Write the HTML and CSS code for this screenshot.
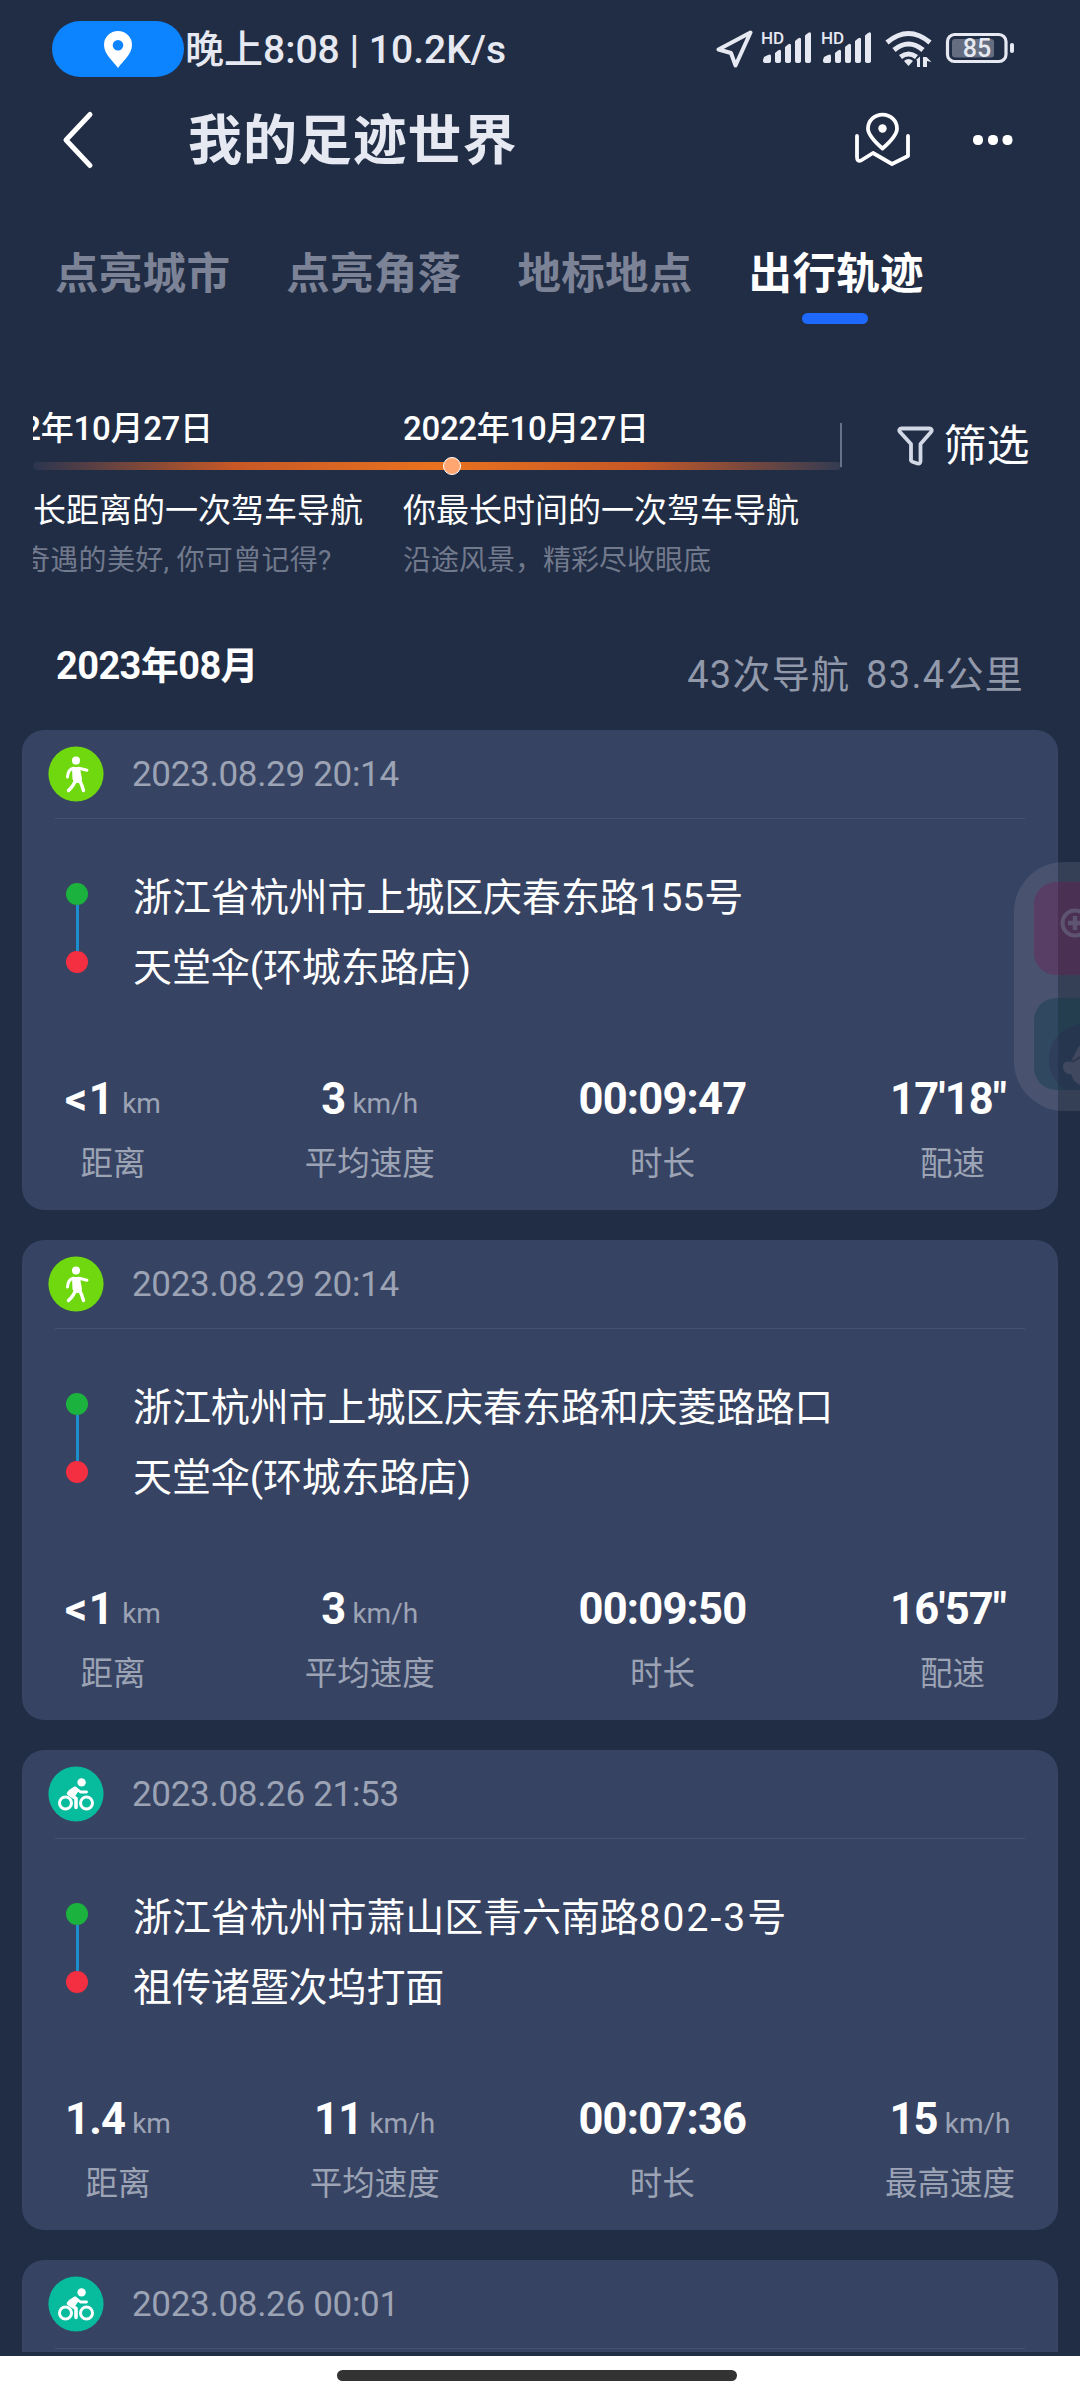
FILE: index.html
```html
<!DOCTYPE html>
<html lang="zh-CN">
<head>
<meta charset="utf-8">
<title>我的足迹世界</title>
<link rel="stylesheet" href="styles.css">
</head>
<body>
<svg class="defs" aria-hidden="true">
  <symbol id="walk" viewBox="0 0 56 56">
    <circle cx="28" cy="28" r="27.6" fill="#70d80f"/>
    <g fill="#fff" stroke="#fff" stroke-linecap="round" stroke-linejoin="round">
      <circle cx="28" cy="14.6" r="4" stroke="none"/>
      <path d="M25 22h6l2 11-1.500 3h-4l-2-3z" stroke-width="2"/>
      <path d="M25.500 22.300q-5.500 1-6 8.700M31 22.200l8 2" fill="none" stroke-width="3"/>
      <path d="M27.500 34q-1.500 5.500-7 10.500M31.500 34q2.500 5 4 10.500" fill="none" stroke-width="3.400"/>
    </g>
  </symbol>
  <symbol id="bike" viewBox="0 0 56 56">
    <circle cx="28" cy="28" r="27.6" fill="#07bb9d"/>
    <g fill="none" stroke="#fff" stroke-linecap="round" stroke-linejoin="round">
      <circle cx="17.500" cy="37" r="6" stroke-width="3"/>
      <circle cx="38.500" cy="37" r="6" stroke-width="3"/>
      <circle cx="33.600" cy="16.400" r="4.200" fill="#fff" stroke="none"/>
      <path d="M28 22.500l4.500 3.500h6" stroke-width="2.800"/>
      <path d="M26.500 22.500q-4 2-6 5l7.500 5v9" stroke-width="3.600"/>
      <path d="M27.500 21.500l-6 5 4.500 3.500 3.500-5z" fill="#fff" stroke-width="2"/>
    </g>
  </symbol>
</svg>
<div class="screen">
  <div class="status">
    <div class="loc-pill">
      <svg width="28" height="37" viewBox="0 0 28 37"><path fill="#fff" fill-rule="evenodd" d="M14 0A14 14 0 0 0 0 14C0 23 9 30 14 37C19 30 28 23 28 14A14 14 0 0 0 14 0ZM14 9a5.300 5.300 0 1 1 0 10.600A5.300 5.300 0 0 1 14 9Z"/></svg>
    </div>
    <span class="clock">晚上8:08 | 10.2K/s</span>
    <svg class="sys" width="302" height="40" viewBox="0 0 302 40">
      <g fill="none" stroke="#e6e9f1" stroke-linejoin="round">
        <path d="M34.500 3.500L2.500 20.500L15 24L19.500 36.500Z" stroke-width="4"/>
        <path d="M171 13.500Q192.500-4.500 214 13.500M178 21Q192.500 9 207 21M184.500 28Q192.500 22 200.500 28" stroke-width="5"/>
        <rect x="231.500" y="5.500" width="58.500" height="27" rx="7" stroke-width="3.200"/>
      </g>
      <g fill="#e6e9f1">
        <path d="M188 32q4.500-4 9 0l-4.500 5zM200 31l4-3.500v10.500h-3v-6.500zM207 28h3.500l5 5-4.500-1v6h-4z"/>
        <rect x="236" y="10" width="42" height="18.500" rx="3" opacity=".35"/>
        <rect x="294" y="14" width="4" height="10" rx="2"/>
        <g id="bars"><path d="M48 28l4-2q3-1.500 3 1v5q0 2-3 2h-2q-3 0-3-2v-1zM59 24l3-2.500q3-2 3 1V32q0 2-3 2t-3-2zM69 18l3-2.500q3-2 3 1V32q0 2-3 2t-3-2zM79 12l3-2.500q3-2 3 1V32q0 2-3 2t-3-2zM89 6.500l3-2.500q3-2 3 1V32q0 2-3 2t-3-2z"/></g>
        <use href="#bars" x="60"/>
        <text x="45" y="14.500" class="hd">HD</text>
        <text x="105" y="14.500" class="hd">HD</text>
        <text x="261" y="28" text-anchor="middle" class="pct">85</text>
      </g>
    </svg>
  </div>

  <header class="bar">
    <svg class="back" width="36" height="60" viewBox="0 0 36 60"><path d="M29 4.500L5 30L29 55.500" fill="none" stroke="#fff" stroke-width="5" stroke-linecap="round" stroke-linejoin="round"/></svg>
    <h1>我的足迹世界</h1>
    <svg class="map" width="58" height="56" viewBox="0 0 58 56"><g fill="none" stroke="#fff" stroke-width="3.800" stroke-linecap="round" stroke-linejoin="round"><path d="M4 24V45q0 5 4 3.500L20 41L39 52L55 44V24"/><path d="M29.500 36.500Q15 24 15 16.500A14.500 13.800 0 0 1 44 16.500Q44 24 29.500 36.500Z"/></g><circle cx="29.500" cy="16.500" r="4.200" fill="#fff"/></svg>
    <svg class="more" width="40" height="10" viewBox="0 0 40 10"><rect width="10" height="10" rx="4.500" fill="#fff"/><rect x="15" width="10" height="10" rx="4.500" fill="#fff"/><rect x="29.500" width="10" height="10" rx="4.500" fill="#fff"/></svg>
  </header>

  <nav class="tabs">
    <span>点亮城市</span><span>点亮角落</span><span>地标地点</span><span class="on">出行轨迹</span>
  </nav>

  <section class="mile">
    <div class="track">
      <div class="line"><i class="dot"></i></div>
      <div class="items">
        <div class="item">
          <b>2022年10月27日</b><p>你最长距离的一次驾车导航</p><small class="cut">奇遇的美好, 你可曾记得?</small>
        </div>
        <div class="item">
          <b>2022年10月27日</b><p>你最长时间的一次驾车导航</p><small>沿途风景，精彩尽收眼底</small>
        </div>
      </div>
    </div>
    <i class="sep"></i>
    <div class="filter">
      <svg width="38" height="40" viewBox="0 0 38 40"><path d="M4.500 2.500H32.500Q36 3 34 6L23.500 18V35.500Q23 38 20.500 37.500L16 36Q13.500 35 14 33V18L3 6Q1 3 4.500 2.500Z" fill="none" stroke="#d2d8e6" stroke-width="3.800" stroke-linejoin="round"/></svg>
      <span>筛选</span>
    </div>
  </section>

  <div class="month"><b>2023年08月</b><span>43次导航 83.4公里</span></div>

  <main class="list">
    <article class="card">
      <div class="head"><svg class="mode"><use href="#walk"/></svg><time>2023.08.29 20:14</time></div>
      <div class="route"><div class="rail"><i></i><u></u><i class="end"></i></div><div class="addr"><p>浙江省杭州市上城区庆春东路155号</p><p>天堂伞(环城东路店)</p></div></div>
      <div class="stats">
        <div><p><b class="lt">&lt;1</b><em>km</em></p><span>距离</span></div>
        <div><p><b>3</b><em>km/h</em></p><span>平均速度</span></div>
        <div><p><b>00:09:47</b></p><span>时长</span></div>
        <div><p><b class="pace">17'18"</b></p><span>配速</span></div>
      </div>
    </article>
    <article class="card">
      <div class="head"><svg class="mode"><use href="#walk"/></svg><time>2023.08.29 20:14</time></div>
      <div class="route"><div class="rail"><i></i><u></u><i class="end"></i></div><div class="addr"><p>浙江杭州市上城区庆春东路和庆菱路路口</p><p>天堂伞(环城东路店)</p></div></div>
      <div class="stats">
        <div><p><b class="lt">&lt;1</b><em>km</em></p><span>距离</span></div>
        <div><p><b>3</b><em>km/h</em></p><span>平均速度</span></div>
        <div><p><b>00:09:50</b></p><span>时长</span></div>
        <div><p><b class="pace">16'57"</b></p><span>配速</span></div>
      </div>
    </article>
    <article class="card">
      <div class="head"><svg class="mode"><use href="#bike"/></svg><time>2023.08.26 21:53</time></div>
      <div class="route"><div class="rail"><i></i><u></u><i class="end"></i></div><div class="addr"><p>浙江省杭州市萧山区青六南路<span class="num">802-3</span>号</p><p>祖传诸暨次坞打面</p></div></div>
      <div class="stats">
        <div><p><b>1.4</b><em>km</em></p><span>距离</span></div>
        <div><p><b>11</b><em>km/h</em></p><span>平均速度</span></div>
        <div><p><b>00:07:36</b></p><span>时长</span></div>
        <div><p><b>15</b><em>km/h</em></p><span>最高速度</span></div>
      </div>
    </article>
    <article class="card">
      <div class="head"><svg class="mode"><use href="#bike"/></svg><time>2023.08.26 00:01</time></div>
    </article>
  </main>

  <footer class="home"><i></i></footer>

  <svg class="float" width="66" height="250" viewBox="0 0 66 250">
    <path d="M66 0H50A50 50 0 0 0 0 50V199A50 50 0 0 0 50 249H66Z" fill="#fff" opacity=".09"/>
    <path d="M66 20H42A22 22 0 0 0 20 42V91A22 22 0 0 0 42 113H66Z" fill="#500032" opacity=".22"/>
    <path d="M66 20H42A22 22 0 0 0 20 42V91A22 22 0 0 0 42 113H66Z" fill="#c02878" opacity=".12"/>
    <path d="M66 136H42A22 22 0 0 0 20 158V206A22 22 0 0 0 42 228H66Z" fill="#0a3a48" opacity=".38"/>
    <path d="M66 162Q34 170 35 200Q36 218 52 228H66Z" fill="#2a2850" opacity=".3"/>
    <path d="M66 183Q61 190 57 200Q48 198 49 206Q51 213 57 212Q59 220 66 223Z" fill="#8a8090" opacity=".25"/>
    <path d="M58 200l8-5" stroke="#182338" stroke-width="2" opacity=".5"/>
    <g fill="none" stroke="#7d879f" opacity=".4"><circle cx="61" cy="61" r="12.500" stroke-width="4"/><path d="M54 61h12M61 54v14" stroke-width="4.500"/></g>
  </svg>
</div>
</body>
</html>
```
FILE: styles.css
```css
* { box-sizing: border-box; margin: 0; padding: 0; }
body {
  width: 1080px;
  background: #212d45;
  color: #fff;
  font-family: Roboto, "Noto Sans CJK SC", sans-serif;
}
i, em { font-style: normal; }
u { text-decoration: none; }
svg { display: block; flex: none; }
.defs { position: absolute; width: 0; height: 0; }
.screen {
  position: relative;
  display: flex;
  flex-direction: column;
  width: 1080px;
  height: 2400px;
  overflow: hidden;
  white-space: nowrap;
}

.status {
  display: flex;
  align-items: center;
  height: 98px;
  padding: 0 62px 0 52px;
  color: #e6e9f1;
}
.loc-pill {
  display: flex;
  align-items: center;
  justify-content: center;
  width: 132px;
  height: 56px;
  border-radius: 28px;
  background: #0d84ff;
}
.clock {
  margin-left: 1px;
  padding-top: 1px;
  font-size: 39px;
  font-weight: 500;
  line-height: 56px;
}
.sys { margin-left: auto; }
.hd { font: 500 17px Roboto, sans-serif; }
.pct { font: 500 25px Roboto, sans-serif; }

.bar {
  display: flex;
  align-items: center;
  height: 84px;
  padding: 0 67px 0 61px;
}
.bar h1 {
  margin-left: 91px;
  padding-top: 3px;
  color: #e6e9f1;
  font-size: 54px;
  font-weight: 700;
  letter-spacing: 0.9px;
  line-height: 84px;
}
.map { margin-left: auto; }
.more { margin-left: 62px; }

.tabs {
  display: flex;
  gap: 56px;
  height: 142px;
  padding: 55px 0 0 55px;
  color: #7c8396;
  font-size: 43.500px;
  font-weight: 700;
  letter-spacing: 0.3px;
  line-height: 76px;
}
.tabs .on {
  display: flex;
  flex-direction: column;
  align-items: center;
  color: #fff;
}
.tabs .on::after {
  content: "";
  width: 66px;
  height: 11px;
  margin-right: 2px;
  border-radius: 6px;
  background: #1e68fb;
}

.mile { display: flex; height: 296px; padding: 81px 0 0 33px; }
.track { display: grid; width: 808px; height: 190px; overflow: hidden; }
.track > * { grid-area: 1 / 1; }
.line {
  display: flex;
  align-items: center;
  height: 8px;
  margin-top: 57px;
  padding-left: 410px;
  border-radius: 4px;
  background: linear-gradient(90deg, #2b3550, #c75826 25%, #ea721e 50%, #c75826 75%, #333b52);
}
.dot {
  width: 18px;
  height: 18px;
  border: 1.500px solid #fff;
  border-radius: 50%;
  background: #ffa671;
}
.items { display: flex; margin-left: -66px; }
.item { display: flex; flex: 0 0 436px; flex-direction: column; }
.item b { padding-top: 1px; font-size: 33px; font-weight: 500; letter-spacing: -0.3px; line-height: 46px; }
.item p { margin-top: 36px; font-size: 33px; line-height: 46px; }
.item small { margin-top: 6px; color: #71798c; font-size: 28px; line-height: 42px; }
.item .cut { margin-left: 55px; letter-spacing: 0.3px; }
.sep { width: 1.500px; height: 44px; margin: 18px 0 0 -1px; background: #67718a; }
.filter { display: flex; align-items: center; height: 60px; margin: 11px 0 0 55px; }
.filter span { margin-left: 9px; font-size: 43px; line-height: 60px; }

.month {
  display: flex;
  justify-content: space-between;
  height: 110px;
  padding: 0 56px 0 56px;
}
.month b { padding-top: 21px; font-size: 38px; font-weight: 700; letter-spacing: -0.6px; line-height: 50px; }
.month span { padding-top: 30px; color: #9199aa; font-size: 38px; letter-spacing: 1.300px; word-spacing: 5px; line-height: 50px; }

.list {
  display: flex;
  flex-direction: column;
  gap: 30px;
  height: 1622px;
  padding: 0 22px;
  overflow: hidden;
}
.card { flex: none; height: 480px; border-radius: 22px; background: #374362; }
.head {
  display: flex;
  align-items: center;
  height: 89px;
  margin: 0 33px;
  border-bottom: 1px solid #46526f;
}
.mode { width: 56px; height: 56px; margin: 0 0 1px -7px; }
.head time {
  margin-left: 28px;
  padding-top: 2px;
  color: #9ca3b5;
  font-size: 35px;
  letter-spacing: -0.300px;
  line-height: 50px;
}
.route { display: flex; height: 210px; padding: 43px 0 0 44px; }
.rail { display: flex; flex-direction: column; align-items: center; width: 22px; padding-top: 21px; }
.rail i { width: 22px; height: 22px; border-radius: 50%; background: #1bb23e; }
.rail u { width: 3px; height: 46px; background: #1b8fce; }
.rail .end { background: #f52f42; }
.addr { margin-left: 45px; padding-top: 1px; font-size: 39px; letter-spacing: -0.100px; line-height: 70px; }
.num { letter-spacing: 2px; }
.stats { display: flex; justify-content: space-between; padding: 43px 43px 0; }
.stats div { display: flex; flex-direction: column; align-items: center; }
.stats p { line-height: 56px; }
.stats b { font-size: 43.500px; font-weight: 700; letter-spacing: -0.800px; }
.stats .lt { letter-spacing: 1.500px; }
.stats .pace { margin-right: 9px; }
.stats em { position: relative; top: -1px; margin-left: 7px; color: #9ca3b5; font-size: 28px; }
.stats span { margin-top: 5px; color: #9ca3b5; font-size: 32.500px; line-height: 44px; }

.home {
  display: flex;
  justify-content: center;
  height: 44px;
  margin-top: auto;
  padding-top: 14px;
  background: #fff;
}
.home i { width: 400px; height: 11px; margin-right: 6px; border-radius: 6px; background: #333; }
.float { position: absolute; top: 862px; right: 0; }
```
